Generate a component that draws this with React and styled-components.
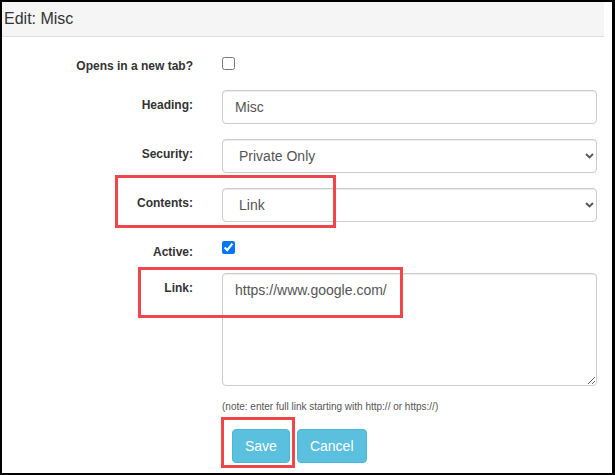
import React from "react";
import styled, { createGlobalStyle } from "styled-components";

const Global = createGlobalStyle`
  html, body { margin: 0; padding: 0; background: #fff; }
  body { font-family: "Liberation Sans", Arial, sans-serif; color: #333; }
  * { box-sizing: border-box; }
`;

const Frame = styled.div`
  position: relative;
  width: 615px;
  height: 475px;
  border-style: solid;
  border-color: #000;
  border-width: 2px 3px 2px 2px;
  background: #fff;
  overflow: hidden;
`;

const Panel = styled.div`
  width: 602px;
`;

const Header = styled.div`
  height: 35px;
  display: flex;
  align-items: center;
  padding: 0 2px 1px;
  background: #f5f5f5;
  border-bottom: 1px solid #ddd;
  font-size: 16px;
  color: #333;
`;

const Body = styled.div`
  padding-top: 14px;
  display: flex;
  flex-direction: column;
`;

const Row = styled.div`
  display: grid;
  grid-template-columns: 191px 375px;
  column-gap: 29px;
  margin-bottom: ${(p) => p.$mb ?? 15}px;
`;

const Label = styled.label`
  text-align: right;
  font-weight: bold;
  font-size: 12px;
  line-height: 20px;
  padding-top: 5px;
  color: #333;
`;

const Control = styled.div`
  position: relative;
  display: flex;
  flex-direction: column;
  align-items: flex-start;
`;

const Check = styled.input.attrs({ type: "checkbox" })`
  width: 13px;
  height: 13px;
  margin: ${(p) => p.$mt ?? 4}px 0 0 0;
`;

const fieldBase = `
  width: 375px;
  border: 1px solid #ccc;
  border-radius: 4px;
  font-family: "Liberation Sans", Arial, sans-serif;
  font-size: 14px;
  color: #555;
  background: #fff;
  box-shadow: inset 0 1px 1px rgba(0,0,0,.075);
  outline: none;
`;

const TextInput = styled.input`
  ${fieldBase}
  height: 34px;
  padding: 6px 12px;
`;

const Select = styled.select`
  ${fieldBase}
  height: 34px;
  padding: 6px 24px 6px 16px;
  appearance: none;
  -webkit-appearance: none;
`;

const Chevron = styled.svg`
  position: absolute;
  right: 3px;
  top: 14px;
  width: 9px;
  height: 6px;
  pointer-events: none;
`;

const TextArea = styled.textarea`
  ${fieldBase}
  height: 113px;
  padding: 6px 12px;
  line-height: 20px;
  resize: both;
`;

const Note = styled.div`
  font-size: 10px;
  line-height: 14px;
  color: #555;
  margin-top: 14px;
`;

const Buttons = styled.div`
  display: flex;
  gap: 7px;
  margin-top: 15px;
  margin-left: 10px;
`;

const Button = styled.button`
  height: 34px;
  padding: 6px 12px;
  font-family: "Liberation Sans", Arial, sans-serif;
  font-size: 14px;
  line-height: 20px;
  color: #fff;
  background: #5bc0de;
  border: 1px solid #46b8da;
  border-radius: 4px;
`;

const Highlight = styled.div`
  position: absolute;
  border: 3px solid #f0454a;
  pointer-events: none;
`;

function SelectField({ value, options }) {
  return (
    <Control>
      <Select defaultValue={value}>
        {options.map((o) => (
          <option key={o}>{o}</option>
        ))}
      </Select>
      <Chevron viewBox="0 0 9 6">
        <path d="M1 1 L4.5 4.5 L8 1" fill="none" stroke="#555" strokeWidth="1.8" />
      </Chevron>
    </Control>
  );
}

export default function App() {
  return (
    <>
      <Global />
      <Frame>
        <Panel>
          <Header>Edit: Misc</Header>
          <Body>
            <Row $mb={14}>
              <Label>Opens in a new tab?</Label>
              <Control>
                <Check $mt={6} />
              </Control>
            </Row>
            <Row>
              <Label>Heading:</Label>
              <Control>
                <TextInput defaultValue="Misc" />
              </Control>
            </Row>
            <Row>
              <Label>Security:</Label>
              <SelectField value="Private Only" options={["Public", "Private Only"]} />
            </Row>
            <Row>
              <Label>Contents:</Label>
              <SelectField value="Link" options={["Page", "Link"]} />
            </Row>
            <Row $mb={11}>
              <Label>Active:</Label>
              <Control>
                <Check $mt={4} defaultChecked />
              </Control>
            </Row>
            <Row $mb={0}>
              <Label>Link:</Label>
              <Control>
                <TextArea defaultValue="https://www.google.com/" />
              </Control>
            </Row>
            <Row $mb={0}>
              <span />
              <Control>
                <Note>(note: enter full link starting with http:// or https://)</Note>
                <Buttons>
                  <Button>Save</Button>
                  <Button>Cancel</Button>
                </Buttons>
              </Control>
            </Row>
          </Body>
        </Panel>
        <Highlight style={{ left: 113, top: 173, width: 221, height: 53 }} />
        <Highlight style={{ left: 136, top: 265, width: 265, height: 51 }} />
        <Highlight style={{ left: 219, top: 415, width: 74, height: 51 }} />
      </Frame>
    </>
  );
}
